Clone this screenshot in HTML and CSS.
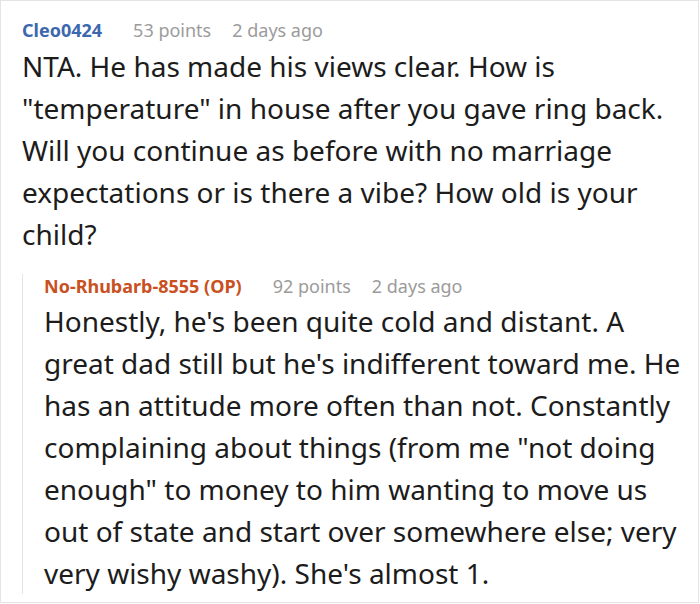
FILE: index.html
```html
<!DOCTYPE html>
<html>
<head>
<meta charset="utf-8">
<link rel="stylesheet" href="styles.css">
</head>
<body>
<div class="thread">
  <div class="comment">
    <div class="meta">
      <span class="author">Cleo0424</span>
      <span class="points">53 points</span>
      <span class="time">2 days ago</span>
    </div>
    <p class="text">NTA. He has made his views clear. How is "temperature" in house after you gave ring back. Will you continue as before with no marriage expectations or is there a vibe? How old is your child?</p>
    <div class="reply">
      <div class="meta">
        <span class="author op">No-Rhubarb-8555 (OP)</span>
        <span class="points">92 points</span>
        <span class="time">2 days ago</span>
      </div>
      <p class="text">Honestly, he's been quite cold and distant. A great dad still but he's indifferent toward me. He has an attitude more often than not. Constantly complaining about things (from me "not doing enough" to money to him wanting to move us out of state and start over somewhere else; very very wishy washy). She's almost 1.</p>
    </div>
  </div>
</div>
</body>
</html>
```

FILE: styles.css
```css
html, body {
  margin: 0;
  padding: 0;
  background: #fff;
}
.thread {
  width: 699px;
  height: 603px;
  box-sizing: border-box;
  border: 1px solid #e4e4e4;
  font-family: "Noto Sans", "Open Sans", sans-serif;
  color: #1c1c1c;
  overflow: hidden;
}
.comment {
  padding: 17px 12px 0 21px;
}
.meta {
  display: flex;
  font-size: 18px;
  line-height: 24px;
  color: #9b9b9b;
}
.author {
  font-weight: 700;
  color: #3c68ae;
  margin-right: 31px;
}
.points {
  margin-right: 21px;
}
.author.op {
  color: #c9511f;
}
.text {
  margin: 3px 0 0;
  font-size: 28px;
  line-height: 42px;
}
.reply {
  margin-top: 28px;
  border-left: 1px solid #e4e4e4;
  padding-left: 21px;
}
.reply .meta {
  margin-top: -9px;
}
.reply .text {
  margin-top: 2px;
}
```
